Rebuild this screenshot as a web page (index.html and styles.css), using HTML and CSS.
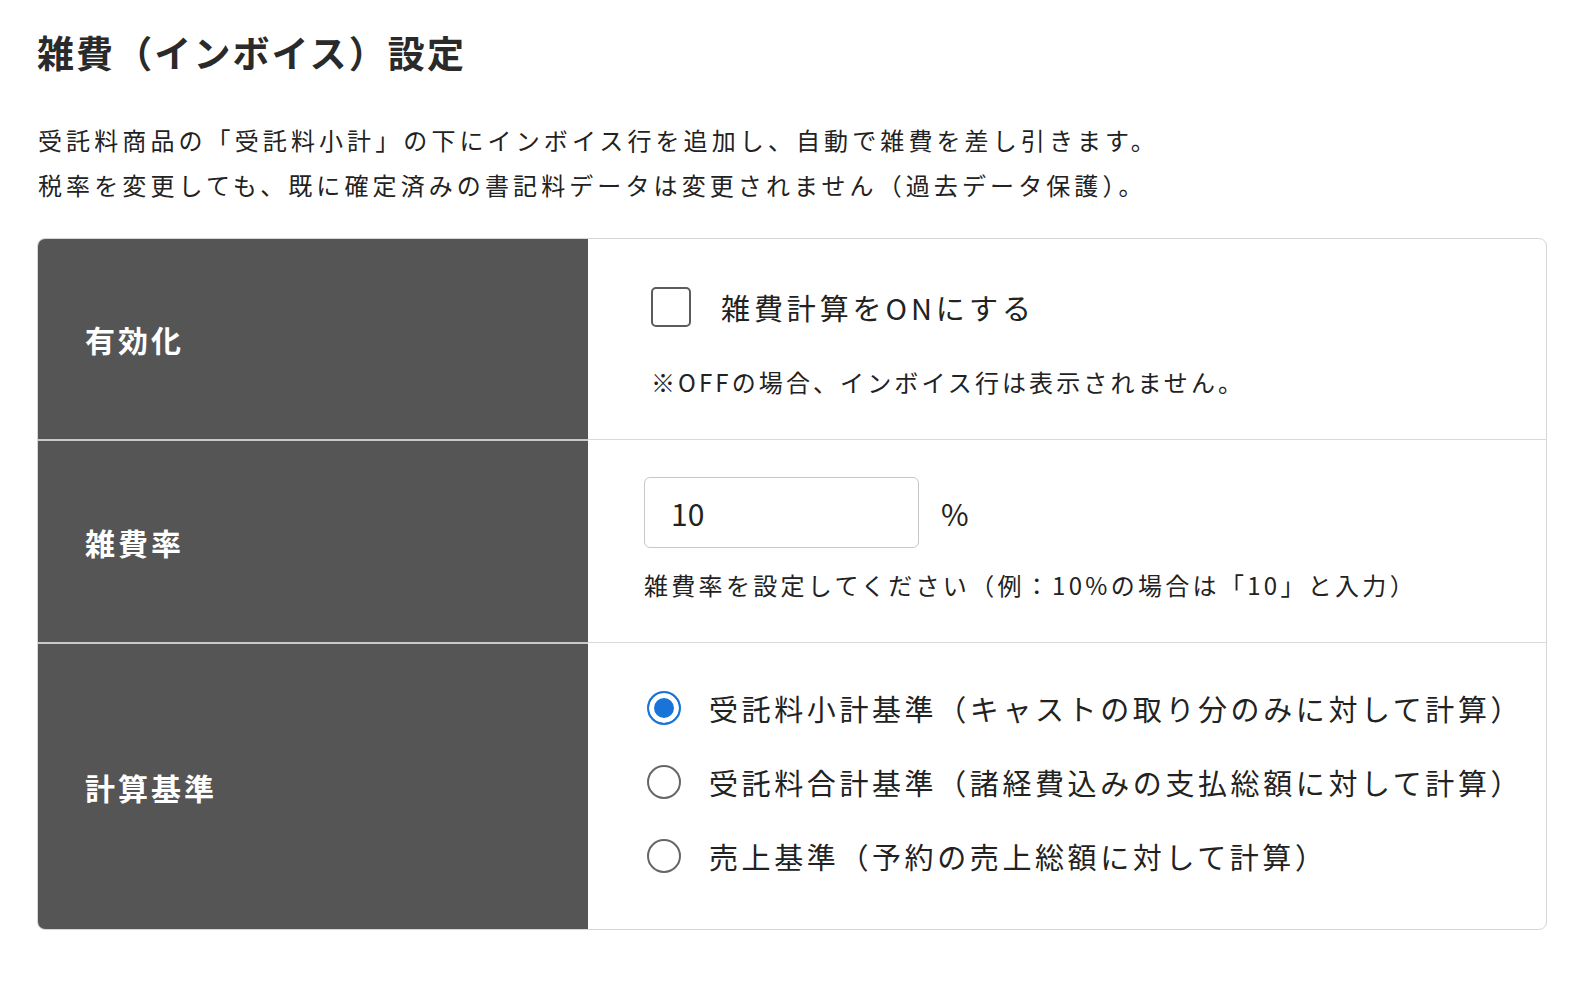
FILE: index.html
```html
<!DOCTYPE html>
<html lang="ja">

<head>
    <meta charset="utf-8">
    <link rel="stylesheet" href="styles.css">
</head>

<body>
    <div class="container">
        <h1 class="page-title">雑費（インボイス）設定</h1>

        <p class="page-desc">
            受託料商品の「受託料小計」の下にインボイス行を追加し、自動で雑費を差し引きます。<br>
            税率を変更しても、既に確定済みの書記料データは変更されません（過去データ保護）。
        </p>

        <div class="setting-table">
            <!-- 有効化 -->
            <div class="setting-row">
                <div class="setting-label">有効化</div>
                <div class="setting-body row-enable">
                    <label class="check-line">
                        <input type="checkbox" class="check-box">
                        <span>雑費計算をONにする</span>
                    </label>
                    <p class="note">※OFFの場合、インボイス行は表示されません。</p>
                </div>
            </div>

            <!-- 雑費率 -->
            <div class="setting-row">
                <div class="setting-label">雑費率</div>
                <div class="setting-body row-rate">
                    <div class="rate-line">
                        <input type="text" class="rate-input" value="10">
                        <span class="rate-unit">%</span>
                    </div>
                    <p class="note">雑費率を設定してください（例：10%の場合は「10」と入力）</p>
                </div>
            </div>

            <!-- 計算基準 -->
            <div class="setting-row">
                <div class="setting-label">計算基準</div>
                <div class="setting-body row-basis">
                    <label class="radio-line">
                        <input type="radio" name="basis" class="radio" checked>
                        <span>受託料小計基準（キャストの取り分のみに対して計算）</span>
                    </label>
                    <label class="radio-line">
                        <input type="radio" name="basis" class="radio">
                        <span>受託料合計基準（諸経費込みの支払総額に対して計算）</span>
                    </label>
                    <label class="radio-line">
                        <input type="radio" name="basis" class="radio">
                        <span>売上基準（予約の売上総額に対して計算）</span>
                    </label>
                </div>
            </div>
        </div>
    </div>
</body>

</html>
```

FILE: styles.css
```css
* {
    box-sizing: border-box;
}

body {
    margin: 0;
    background: #fff;
    color: #222;
    font-family: "Noto Sans CJK JP", "Noto Sans", sans-serif;
}

.container {
    padding: 30px 40px 0 37px;
}

.page-title {
    margin: 0;
    font-size: 37px;
    line-height: 44px;
    font-weight: bold;
    letter-spacing: 2.1px;
    color: #2a2a2a;
}

.page-desc {
    margin: 43px 0 31px 1px;
    font-size: 24px;
    line-height: 45px;
    letter-spacing: 4.1px;
}

.setting-table {
    width: 1510px;
    border: 1px solid #d6d6d6;
    border-radius: 8px;
    overflow: hidden;
}

.setting-row {
    display: flex;
}

.setting-row + .setting-row .setting-label {
    border-top: 2px solid #c9c9c9;
}

.setting-row + .setting-row .setting-body {
    border-top: 1px solid #d9d9d9;
}

.setting-label {
    width: 550px;
    flex-shrink: 0;
    background: #555;
    color: #fff;
    font-size: 30px;
    font-weight: bold;
    letter-spacing: 3px;
    padding-left: 47px;
    display: flex;
    align-items: center;
}

.setting-body {
    flex: 1;
    padding-left: 56px;
}

.note {
    margin: 0;
    font-size: 24px;
    line-height: 32px;
    letter-spacing: 3.1px;
}

/* 有効化 */
.row-enable {
    padding-top: 48px;
    padding-bottom: 41px;
    padding-left: 63px;
}

.check-line {
    display: flex;
    align-items: center;
    gap: 30px;
    font-size: 29px;
    letter-spacing: 3.9px;
    line-height: 40px;
}

.check-box {
    appearance: none;
    margin: 0;
    width: 40px;
    height: 40px;
    border: 2px solid #5c5c5c;
    border-radius: 5px;
    background: #fff;
}

.row-enable .note {
    margin-top: 39px;
}

/* 雑費率 */
.row-rate {
    padding-top: 37px;
    padding-bottom: 41px;
}

.rate-line {
    display: flex;
    align-items: center;
    gap: 22px;
}

.rate-input {
    width: 275px;
    height: 71px;
    border: 1px solid #c8c8c8;
    border-radius: 6px;
    padding: 0 26px;
    font-family: "Noto Sans CJK JP", "Noto Sans", sans-serif;
    font-size: 30px;
    color: #222;
    background: #fff;
}

.rate-unit {
    font-size: 30px;
}

.row-rate .note {
    margin-top: 21px;
    letter-spacing: 3.3px;
}

/* 計算基準 */
.row-basis {
    padding-top: 45px;
    padding-bottom: 53px;
    padding-left: 59px;
    display: flex;
    flex-direction: column;
    gap: 34px;
}

.radio-line {
    display: flex;
    align-items: center;
    gap: 28px;
    font-size: 29px;
    line-height: 40px;
    letter-spacing: 3.6px;
}

.radio {
    appearance: none;
    margin: 0;
    width: 34px;
    height: 34px;
    border: 2px solid #666;
    border-radius: 50%;
    background: #fff;
    flex-shrink: 0;
}

.radio:checked {
    border-color: #1a74d8;
    background: #1a74d8;
    box-shadow: inset 0 0 0 5px #fff;
}
```
